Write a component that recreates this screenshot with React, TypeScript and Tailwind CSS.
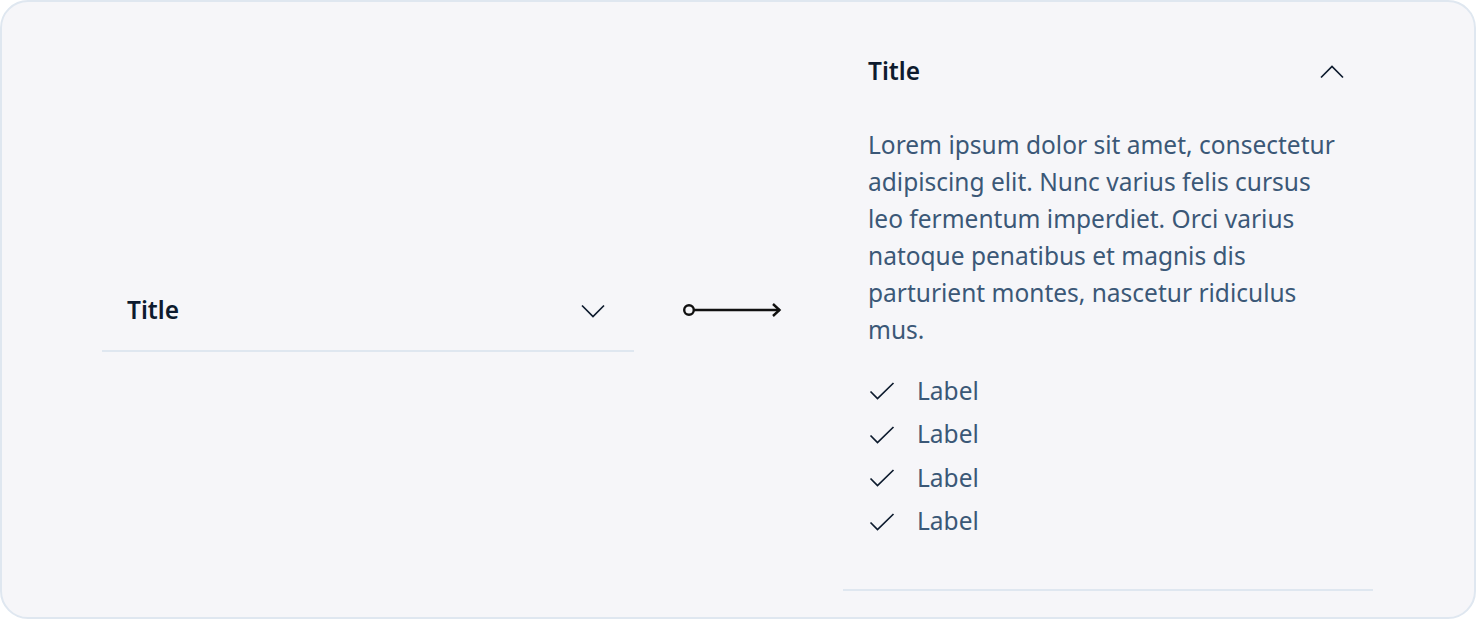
const font = { fontFamily: '"Noto Sans", "Open Sans", sans-serif' };

function Chevron({ up = false }: { up?: boolean }) {
  return (
    <svg width="24" height="14" viewBox="0 0 24 14" fill="none" className="shrink-0">
      <path
        d={up ? 'M1 12.5 12 1.5 23 12.5' : 'M1 1.5 12 12.5 23 1.5'}
        stroke="#0d1b2e"
        strokeWidth="1.7"
      />
    </svg>
  );
}

function Check() {
  return (
    <svg width="26" height="18" viewBox="0 0 26 18" fill="none" className="shrink-0">
      <path d="M1.5 9.5 8.5 16.5 24.5 1" stroke="#0d1b2e" strokeWidth="1.7" />
    </svg>
  );
}

function Header({ up = false }: { up?: boolean }) {
  return (
    <div className="flex h-[82px] items-center justify-between pl-[25px] pr-[29px] pt-[4px]">
      <span className="text-[24.5px] font-semibold text-[#0d1b2e]">Title</span>
      <Chevron up={up} />
    </div>
  );
}

function Arrow() {
  return (
    <svg width="100" height="16" viewBox="0 0 100 16" fill="none">
      <circle cx="6" cy="8" r="4.8" stroke="#111" strokeWidth="2.4" fill="#f6f6f9" />
      <path d="M11 8H97" stroke="#111" strokeWidth="2.4" />
      <path d="M90 2 96.5 8 90 14" stroke="#111" strokeWidth="2.4" />
    </svg>
  );
}

export default function App() {
  const labels = ['Label', 'Label', 'Label', 'Label'];

  return (
    <div style={font} className="h-[619px] w-[1476px] bg-white">
      <div className="flex h-full items-center rounded-[28px] border-2 border-[#dfe7f0] bg-[#f6f6f9] pl-[100px]">
        <div className="w-[532px] border-b-2 border-[#dfe7f0]">
          <Header />
        </div>

        <div className="ml-[49px] w-[100px]">
          <Arrow />
        </div>

        <div className="ml-[60px] w-[530px] border-b-2 border-[#dfe7f0] pb-[45px]">
          <Header up />
          <div className="mt-[15px] pl-[25px] pr-[30px]">
            <p className="text-[24.5px] leading-[37px] text-[#3b5877]">
              Lorem ipsum dolor sit amet, consectetur adipiscing elit. Nunc varius felis cursus leo
              fermentum imperdiet. Orci varius natoque penatibus et magnis dis parturient montes,
              nascetur ridiculus mus.
            </p>
            <ul className="mt-[22px]">
              {labels.map((l, i) => (
                <li key={i} className="flex h-[43.5px] items-center gap-[22px] pl-[1px]">
                  <Check />
                  <span className="text-[24.5px] text-[#3b5877]">{l}</span>
                </li>
              ))}
            </ul>
          </div>
        </div>
      </div>
    </div>
  );
}
